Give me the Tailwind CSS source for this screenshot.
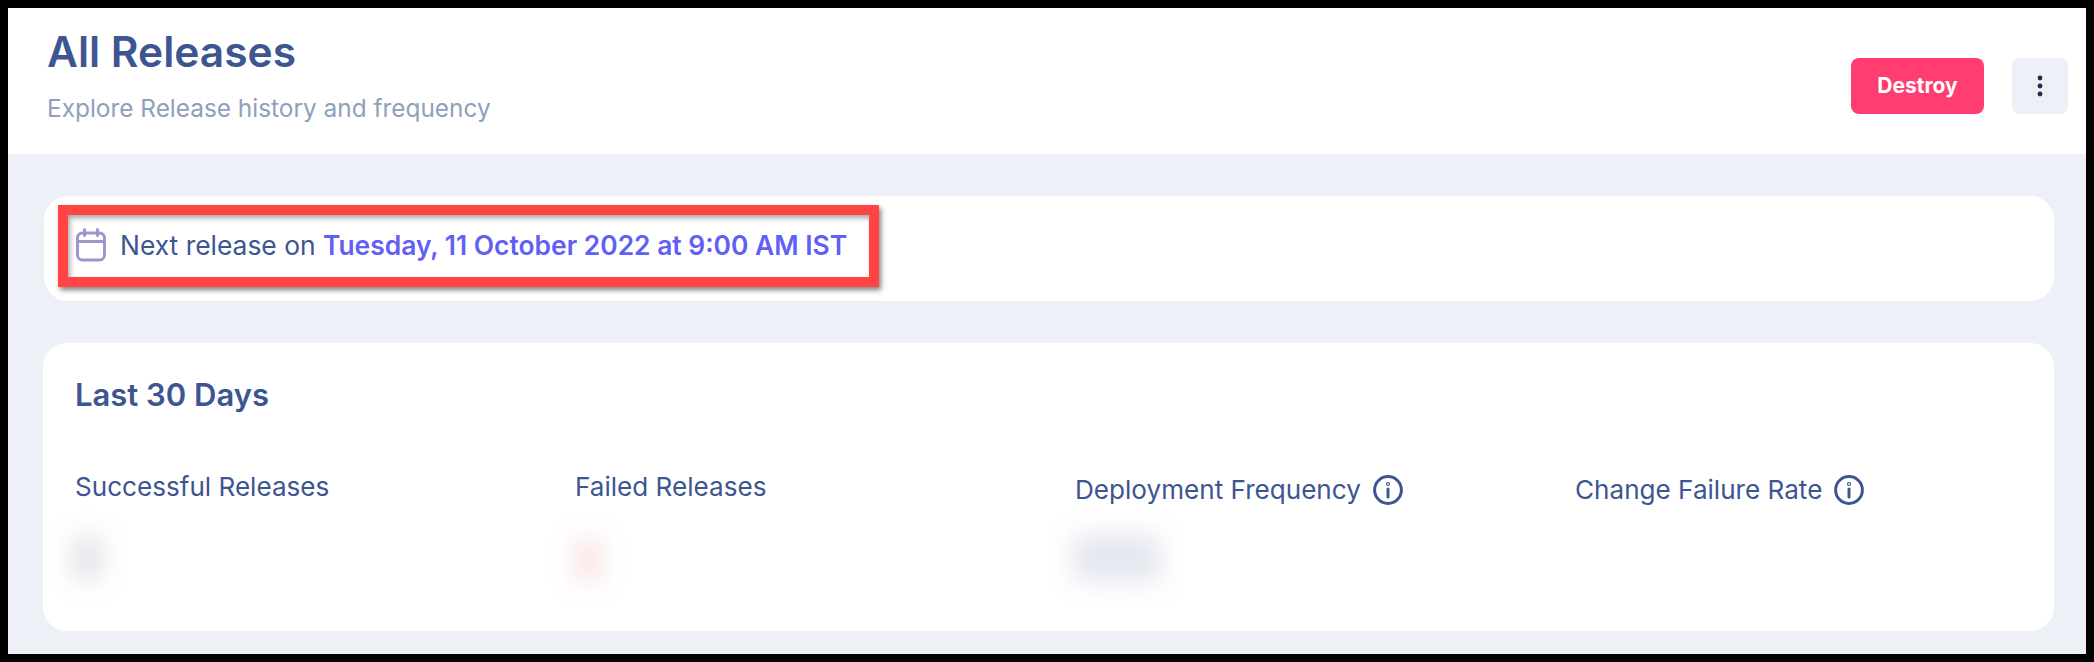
<!DOCTYPE html>
<html>
<head>
    <title>All Releases</title>
    <meta name="viewport" content="width=device-width, initial-scale=1.0">
    <script src="https://cdn.jsdelivr.net/npm/@tailwindcss/browser@4"></script>
</head>
<body class="bg-black font-['Inter',sans-serif]">
    <div class="m-2 h-[646px] w-[2078px] overflow-hidden bg-[#edf1f7]">
        <!-- Header -->
        <header class="flex h-[146px] items-start justify-between bg-white pl-[39px] pr-[18px]">
            <div>
                <h1 class="mt-[20px] text-[42.5px] leading-[48px] font-semibold text-[#3d5591]">All Releases</h1>
                <p class="mt-[16px] text-[24.4px] leading-[32px] text-[#8f9fbc]">Explore Release history and frequency</p>
            </div>
            <div class="mt-[50px] flex gap-[28px]">
                <button class="h-14 w-[133px] rounded-lg bg-[#ff3d71] text-[21px] font-bold text-white">Destroy</button>
                <button class="flex h-14 w-14 items-center justify-center rounded-lg bg-[#edf1f7]">
                    <svg width="6" height="22" viewBox="0 0 6 22" fill="#222b45"><circle cx="3" cy="3" r="2.4"/><circle cx="3" cy="11" r="2.4"/><circle cx="3" cy="19" r="2.4"/></svg>
                </button>
            </div>
        </header>

        <main class="ml-[36px] mr-[32px] pt-[42px]">
            <!-- Next release -->
            <div class="h-[105px] rounded-[24px] bg-white pl-[14px] pt-[9px]">
                <div class="flex h-[82px] w-[821px] items-center border-[10px] border-[#ff4444] pl-2 shadow-[2px_3px_5px_rgba(0,0,0,0.5),inset_2px_3px_5px_rgba(0,0,0,0.35)]">
                    <svg class="mb-[2px]" width="30" height="34" viewBox="0 0 30 34" fill="none" stroke="#9c98c9" stroke-width="3" stroke-linecap="round">
                        <rect x="1.5" y="5" width="27" height="27" rx="5"/>
                        <path d="M1.5 13.5h27M8.5 1.5v6M21.5 1.5v6"/>
                    </svg>
                    <p class="ml-[14px] whitespace-nowrap text-[26.4px] text-[#3d5591]">Next release on <span class="font-semibold text-[#6160f5]">Tuesday, 11 October 2022 at 9:00 AM IST</span></p>
                </div>
            </div>

            <!-- Last 30 Days -->
            <div class="mt-[42px] -ml-px h-[288px] rounded-[24px] bg-white pl-[32px] pt-[32px]">
                <h2 class="text-[31px] leading-[40px] font-semibold text-[#3d5591]">Last 30 Days</h2>
                <div class="mt-[56px] grid grid-cols-[repeat(4,500px)] items-start text-[26.1px] text-[#3d5591]">
                    <div>
                        <p class="leading-[32px]">Successful Releases</p>
                        <div class="mt-[33px] ml-[-4px] h-[44px] w-[32px] rounded bg-[#e3e5e9] blur-[12px]"></div>
                    </div>
                    <div>
                        <p class="leading-[32px]">Failed Releases</p>
                        <div class="mt-[35px] ml-[-1px] h-[44px] w-[28px] rounded bg-[#fae3e5] blur-[12px]"></div>
                    </div>
                    <div>
                        <p class="flex items-center gap-[12px] leading-[32px] pt-[3px]">Deployment Frequency
                            <svg width="30" height="30" viewBox="0 0 30 30" fill="none" stroke="#3d5591" stroke-width="3" stroke-linecap="round"><circle cx="15" cy="15" r="13.4"/><path d="M15 14v8"/><circle cx="15" cy="9" r="0.6"/></svg>
                        </p>
                        <div class="mt-[29px] ml-[-2px] h-[46px] w-[88px] rounded bg-[#e3e6ee] blur-[13px]"></div>
                    </div>
                    <div>
                        <p class="flex items-center gap-[12px] leading-[32px] pt-[3px]">Change Failure Rate
                            <svg width="30" height="30" viewBox="0 0 30 30" fill="none" stroke="#3d5591" stroke-width="3" stroke-linecap="round"><circle cx="15" cy="15" r="13.4"/><path d="M15 14v8"/><circle cx="15" cy="9" r="0.6"/></svg>
                        </p>
                    </div>
                </div>
            </div>
        </main>
    </div>
</body>
</html>
